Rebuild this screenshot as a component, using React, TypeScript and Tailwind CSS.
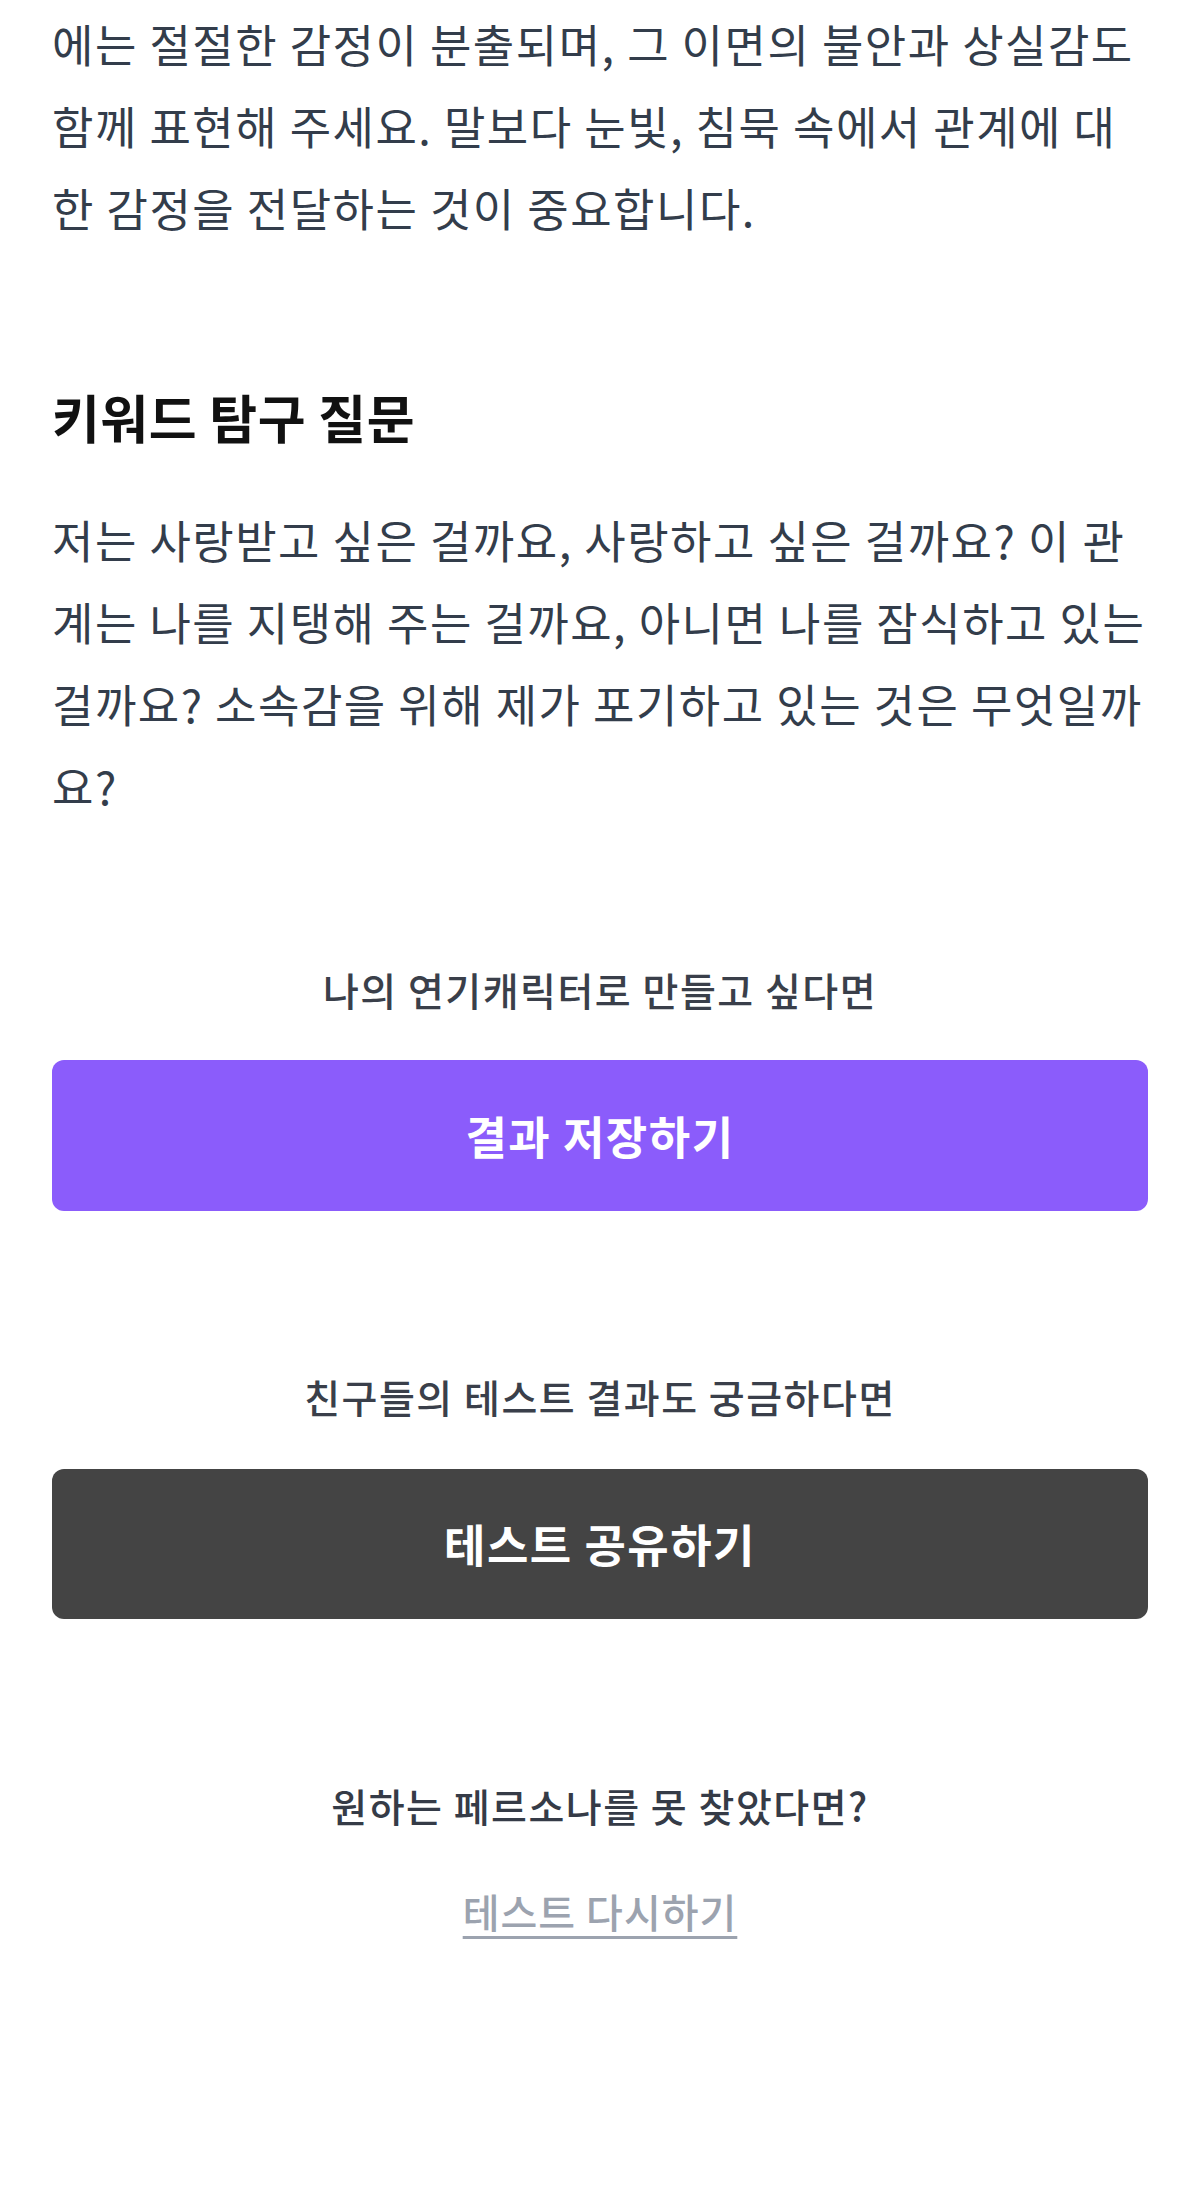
import React from "react";

const FONT = { fontFamily: '"Noto Sans CJK KR", "Noto Sans", sans-serif' };

function Lines({ lines }: { lines: string[] }) {
  return (
    <>
      {lines.map((l, i) => (
        <span key={i} className="block whitespace-nowrap">
          {l}
        </span>
      ))}
    </>
  );
}

export default function App() {
  return (
    <div className="min-h-[2199px] w-full bg-white" style={FONT}>
      <div className="px-[52px] pt-[3px] pb-[240px]">
        <p className="text-[45px] leading-[82px] text-[#333d4b] tracking-[1.5px]">
          <Lines
            lines={[
              "에는 절절한 감정이 분출되며, 그 이면의 불안과 상실감도",
              "함께 표현해 주세요. 말보다 눈빛, 침묵 속에서 관계에 대",
              "한 감정을 전달하는 것이 중요합니다.",
            ]}
          />
        </p>

        <h2 className="mt-[133px] text-[52px] leading-[70px] font-bold text-[#111111] tracking-[0.5px]">
          키워드 탐구 질문
        </h2>

        <p className="mt-[47px] text-[45px] leading-[82px] text-[#333d4b] tracking-[1.5px]">
          <Lines
            lines={[
              "저는 사랑받고 싶은 걸까요, 사랑하고 싶은 걸까요? 이 관",
              "계는 나를 지탱해 주는 걸까요, 아니면 나를 잠식하고 있는",
              "걸까요? 소속감을 위해 제가 포기하고 있는 것은 무엇일까",
              "요?",
            ]}
          />
        </p>

        <div className="mt-[136px] flex flex-col items-center">
          <p className="text-[39px] leading-[52px] font-medium text-[#3a3f4a] tracking-[1.5px]">
            나의 연기캐릭터로 만들고 싶다면
          </p>
          <button className="mt-[45px] flex h-[151px] w-full items-center justify-center rounded-[12px] bg-[#8b5cfb] text-[45px] font-semibold text-white tracking-[1.5px]">
            결과 저장하기
          </button>

          <p className="mt-[159px] text-[39px] leading-[52px] font-medium text-[#3a3f4a] tracking-[1.5px]">
            친구들의 테스트 결과도 궁금하다면
          </p>
          <button className="mt-[47px] flex h-[150px] w-full items-center justify-center rounded-[12px] bg-[#444444] text-[45px] font-semibold text-white tracking-[1.5px]">
            테스트 공유하기
          </button>

          <p className="mt-[160px] text-[39px] leading-[52px] font-medium text-[#353b47] tracking-[1.5px]">
            원하는 페르소나를 못 찾았다면?
          </p>
          <a className="mt-[54px] text-[40px] leading-[52px] font-medium text-[#9ca3af] underline underline-offset-[8px] decoration-[3px] tracking-[1px]">
            테스트 다시하기
          </a>
        </div>
      </div>
    </div>
  );
}
